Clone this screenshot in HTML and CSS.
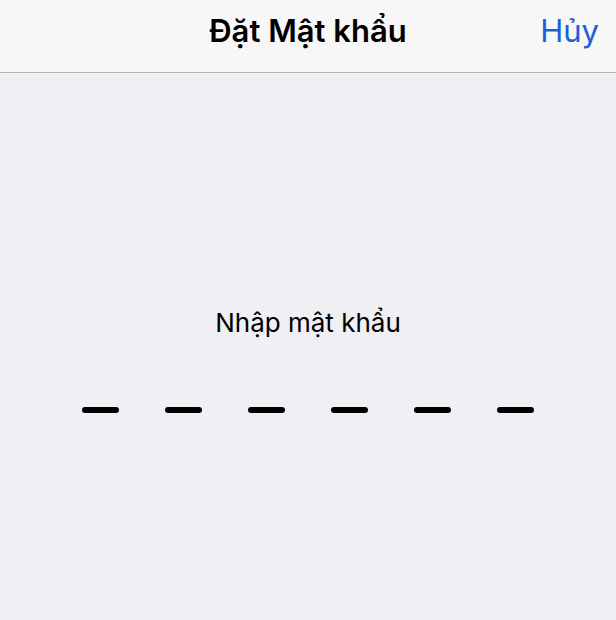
FILE: index.html
```html
<!DOCTYPE html>
<html lang="vi">
<head>
<meta charset="utf-8">
<link rel="stylesheet" href="styles.css">
</head>
<body>
<header class="nav">
  <div class="nav-side"></div>
  <h1 class="nav-title">Đặt Mật khẩu</h1>
  <div class="nav-side nav-right"><span class="nav-btn">Hủy</span></div>
</header>
<main class="content">
  <p class="prompt">Nhập mật khẩu</p>
  <div class="dashes">
    <span class="dash"></span>
    <span class="dash"></span>
    <span class="dash"></span>
    <span class="dash"></span>
    <span class="dash"></span>
    <span class="dash"></span>
  </div>
</main>
</body>
</html>
```
FILE: styles.css
```css
html, body {
  margin: 0;
  padding: 0;
  height: 100%;
}
body {
  background: #efeff4;
  font-family: Inter, "Open Sans", "Liberation Sans", sans-serif;
  color: #000;
}
.nav {
  height: 73px;
  box-sizing: border-box;
  padding-bottom: 10px;
  background: #f7f7f7;
  border-bottom: 1px solid #b5b5b8;
  display: grid;
  grid-template-columns: 1fr auto 1fr;
  align-items: center;
}
.nav-title {
  margin: 0;
  font-size: 31px;
  line-height: 38px;
  font-weight: 600;
}
.nav-right {
  display: flex;
  justify-content: flex-end;
  padding-right: 17px;
}
.nav-btn {
  color: #1d5fd6;
  font-size: 31px;
  line-height: 38px;
  font-weight: 400;
}
.content {
  display: flex;
  flex-direction: column;
  align-items: center;
  padding-top: 234px;
}
.prompt {
  margin: 0;
  font-size: 26px;
  line-height: 32px;
}
.dashes {
  display: flex;
  gap: 46px;
  margin-top: 68px;
}
.dash {
  width: 37px;
  height: 6px;
  border-radius: 3px;
  background: #000;
}
```
